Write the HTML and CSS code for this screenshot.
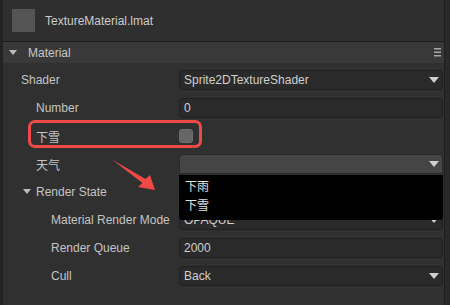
FILE: index.html
```html
<!DOCTYPE html>
<html lang="en">
<head>
  <meta charset="UTF-8" />
  <meta name="viewport" content="width=device-width, initial-scale=1.0"/>
  <title>Material Inspector</title>
  <link rel="stylesheet" href="styles.css">
</head>
<body>
  <div class="screen">
    <div class="inspector">
      <div class="panel">
        <div class="file-head">
          <div class="thumb"></div>
          <span class="file-name">TextureMaterial.lmat</span>
        </div>

        <div class="section-head">
          <span class="caret"></span>
          <span class="section-title">Material</span>
          <svg class="menu-icon" width="7" height="9" viewBox="0 0 7 9">
            <rect x="0" y="0" width="7" height="1.5" fill="#a8a8a8"/>
            <rect x="0" y="3.5" width="7" height="1.5" fill="#a8a8a8"/>
            <rect x="0" y="7" width="7" height="1.5" fill="#a8a8a8"/>
          </svg>
        </div>

        <div class="props">
          <div class="row depth-1">
            <span class="label">Shader</span>
            <div class="field select">Sprite2DTextureShader<span class="arrow"></span></div>
          </div>

          <div class="row depth-2">
            <span class="label">Number</span>
            <div class="field">0</div>
          </div>

          <div class="row depth-2">
            <span class="label cjk">下雪</span>
            <div class="check-cell"><span class="checkbox"></span></div>
            <div class="highlight"></div>
          </div>

          <div class="row depth-2">
            <span class="label cjk">天气</span>
            <div class="field select open"><span class="arrow"></span>
              <ul class="popup cjk">
                <li>下雨</li>
                <li>下雪</li>
              </ul>
            </div>
          </div>

          <div class="row group">
            <span class="label"><span class="caret small"></span>Render State</span>
          </div>

          <div class="row depth-3">
            <span class="label">Material Render Mode</span>
            <div class="field select">OPAQUE<span class="arrow"></span></div>
          </div>

          <div class="row depth-3">
            <span class="label">Render Queue</span>
            <div class="field">2000</div>
          </div>

          <div class="row depth-3">
            <span class="label">Cull</span>
            <div class="field select">Back<span class="arrow"></span></div>
          </div>
        </div>
      </div>
      <div class="scrollbar"></div>
    </div>

    <!-- annotation arrow -->
    <svg class="pointer" width="450" height="305" viewBox="0 0 450 305">
      <polygon points="112,159.5 145.5,179 150,175 155,190 138,187 142.5,183" fill="#f04a45"/>
    </svg>
  </div>
</body>
</html>
```

FILE: styles.css
```css
* {
  box-sizing: border-box;
  font-family: 'Liberation Sans', Arial, 'Noto Sans CJK SC', sans-serif;
}

body {
  margin: 0;
  background-color: #2f2f2f;
}

.screen {
  position: relative;
  width: 450px;
  height: 305px;
  overflow: hidden;
}

.inspector {
  display: flex;
  height: 100%;
  background-color: #303030;
  border-left: 3px solid #232323;
}

.panel {
  flex: 1;
  display: flex;
  flex-direction: column;
}

.scrollbar {
  width: 6px;
  background-color: #292929;
  border-left: 1px solid #1f1f1f;
}

.file-head {
  display: flex;
  align-items: center;
  gap: 10px;
  height: 42px;
  padding-left: 9px;
  background-color: #2f2f2f;
  border-bottom: 1px solid #1c1c1c;
}

.thumb {
  width: 23px;
  height: 23px;
  background-color: #545454;
}

.file-name {
  font-size: 12px;
  color: #cccccc;
}

.section-head {
  display: flex;
  align-items: center;
  height: 21px;
  padding: 0 3px 0 6px;
  background-color: #393939;
}

.caret {
  width: 0;
  height: 0;
  border-left: 4px solid transparent;
  border-right: 4px solid transparent;
  border-top: 5px solid #bdbdbd;
  margin-right: 11px;
}

.caret.small {
  display: inline-block;
  margin-right: 5px;
  vertical-align: 2px;
}

.section-title {
  flex: 1;
  font-size: 12px;
  color: #c8c8c8;
}

.props {
  padding-top: 3px;
}

.row {
  position: relative;
  display: grid;
  grid-template-columns: 1fr 264px;
  align-items: center;
  height: 28px;
  padding-right: 1px;
}

.label {
  font-size: 12px;
  color: #c4c4c4;
  white-space: nowrap;
}

.cjk {
  font-family: 'Noto Sans CJK SC', sans-serif;
}

.depth-1 .label { padding-left: 18px; }
.depth-2 .label { padding-left: 33px; }
.depth-3 .label { padding-left: 48px; }
.group .label { padding-left: 20px; }

.field {
  position: relative;
  height: 20px;
  line-height: 18px;
  padding-left: 4px;
  font-size: 12px;
  color: #d0d0d0;
  background-color: #2a2a2a;
  border: 1px solid #202020;
  border-radius: 4px;
}

.field.open {
  background-color: #454545;
  border-color: #2a2a2a;
  border-radius: 4px 4px 0 0;
}

.arrow {
  position: absolute;
  right: 3px;
  top: 6px;
  width: 0;
  height: 0;
  border-left: 5px solid transparent;
  border-right: 5px solid transparent;
  border-top: 6px solid #cfcfcf;
}

.check-cell {
  display: flex;
  align-items: center;
}

.checkbox {
  width: 14px;
  height: 14px;
  background-color: #666666;
  border: 1px solid #6e6e6e;
  border-radius: 3px;
}

.highlight {
  position: absolute;
  top: -2px;
  left: 25px;
  width: 174px;
  height: 28px;
  border: 3px solid #ef4a47;
  border-radius: 7px;
}

.popup {
  position: absolute;
  top: 20px;
  left: -1px;
  right: -1px;
  height: 45px;
  margin: 0;
  padding: 3px 0 0 6px;
  list-style: none;
  background-color: #000000;
  border-radius: 0 0 4px 4px;
  z-index: 2;
}

.popup li {
  height: 19px;
  line-height: 19px;
  font-size: 12px;
  color: #e0e0e0;
}

.pointer {
  position: absolute;
  left: 0;
  top: 0;
  pointer-events: none;
}
```
